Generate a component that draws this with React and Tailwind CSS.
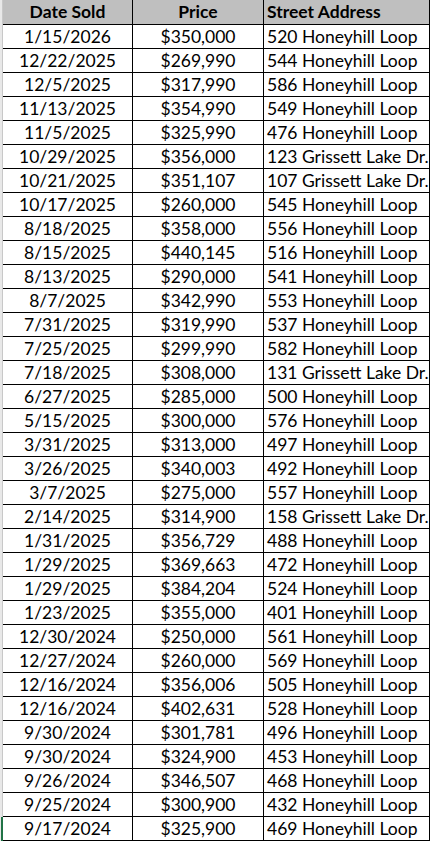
const sales = [
  ["1/15/2026", "$350,000", "520 Honeyhill Loop"],
  ["12/22/2025", "$269,990", "544 Honeyhill Loop"],
  ["12/5/2025", "$317,990", "586 Honeyhill Loop"],
  ["11/13/2025", "$354,990", "549 Honeyhill Loop"],
  ["11/5/2025", "$325,990", "476 Honeyhill Loop"],
  ["10/29/2025", "$356,000", "123 Grissett Lake Dr."],
  ["10/21/2025", "$351,107", "107 Grissett Lake Dr."],
  ["10/17/2025", "$260,000", "545 Honeyhill Loop"],
  ["8/18/2025", "$358,000", "556 Honeyhill Loop"],
  ["8/15/2025", "$440,145", "516 Honeyhill Loop"],
  ["8/13/2025", "$290,000", "541 Honeyhill Loop"],
  ["8/7/2025", "$342,990", "553 Honeyhill Loop"],
  ["7/31/2025", "$319,990", "537 Honeyhill Loop"],
  ["7/25/2025", "$299,990", "582 Honeyhill Loop"],
  ["7/18/2025", "$308,000", "131 Grissett Lake Dr."],
  ["6/27/2025", "$285,000", "500 Honeyhill Loop"],
  ["5/15/2025", "$300,000", "576 Honeyhill Loop"],
  ["3/31/2025", "$313,000", "497 Honeyhill Loop"],
  ["3/26/2025", "$340,003", "492 Honeyhill Loop"],
  ["3/7/2025", "$275,000", "557 Honeyhill Loop"],
  ["2/14/2025", "$314,900", "158 Grissett Lake Dr."],
  ["1/31/2025", "$356,729", "488 Honeyhill Loop"],
  ["1/29/2025", "$369,663", "472 Honeyhill Loop"],
  ["1/29/2025", "$384,204", "524 Honeyhill Loop"],
  ["1/23/2025", "$355,000", "401 Honeyhill Loop"],
  ["12/30/2024", "$250,000", "561 Honeyhill Loop"],
  ["12/27/2024", "$260,000", "569 Honeyhill Loop"],
  ["12/16/2024", "$356,006", "505 Honeyhill Loop"],
  ["12/16/2024", "$402,631", "528 Honeyhill Loop"],
  ["9/30/2024", "$301,781", "496 Honeyhill Loop"],
  ["9/30/2024", "$324,900", "453 Honeyhill Loop"],
  ["9/26/2024", "$346,507", "468 Honeyhill Loop"],
  ["9/25/2024", "$300,900", "432 Honeyhill Loop"],
  ["9/17/2024", "$325,900", "469 Honeyhill Loop"],
];

const App = () => {
  return (
    <div
      className="w-[431px] min-h-[843px] bg-white text-black text-[17.5px] leading-[24px]"
      style={{ fontFamily: "Lato, 'Open Sans', sans-serif" }}
    >
      {/* header row */}
      <div className="flex h-[25px]">
        <div className="w-[3px] shrink-0 bg-[#e8e8e8] border-r border-[#c8c8c8]" />
        <div className="flex w-[427px] shrink-0 bg-[#bfbfbf] border-b border-r border-black font-bold">
          <div className="w-[130px] shrink-0 text-center border-r border-black">Date Sold</div>
          <div className="w-[131px] shrink-0 text-center border-r border-black">Price</div>
          <div className="flex-1 min-w-0 pl-[3px] whitespace-nowrap overflow-hidden">Street Address</div>
        </div>
      </div>

      {sales.map(([date, price, address], i) => (
        <div key={i} className="flex h-[24px]">
          <div
            className={
              i === sales.length - 1
                ? "w-[3px] shrink-0 bg-[#e8e8e8] border-r-2 border-[#217346]"
                : "w-[3px] shrink-0 bg-[#e8e8e8] border-r border-[#c8c8c8]"
            }
          />
          <div className="flex w-[427px] shrink-0 border-b border-r border-black">
            <div className="w-[130px] shrink-0 text-center border-r border-black">{date}</div>
            <div className="w-[131px] shrink-0 text-center border-r border-black">{price}</div>
            <div className="flex-1 min-w-0 pl-[3px] whitespace-nowrap overflow-hidden">{address}</div>
          </div>
        </div>
      ))}
    </div>
  );
};

export default App;
